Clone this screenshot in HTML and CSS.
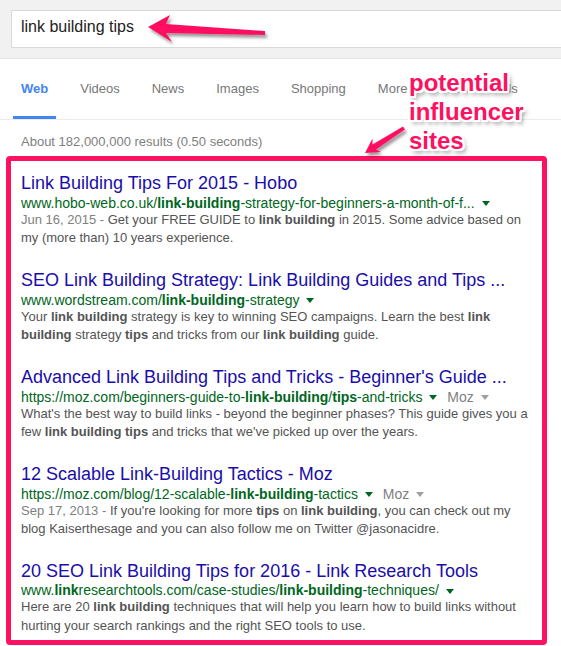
FILE: index.html
```html
<!DOCTYPE html>
<html lang="en">
<head>
    <meta charset="UTF-8">
    <meta name="viewport" content="width=device-width, initial-scale=1.0">
    <title>link building tips - Search</title>
    <link rel="stylesheet" href="styles.css">
</head>
<body>
    <div class="searchbar">
        <div class="searchbox">link building tips</div>
    </div>

    <div class="tabs">
        <span class="tab active">Web</span>
        <span class="tab">Videos</span>
        <span class="tab">News</span>
        <span class="tab">Images</span>
        <span class="tab">Shopping</span>
        <span class="tab">More</span>
        <span class="tab tools">Search tools</span>
    </div>

    <div class="stats">About 182,000,000 results (0.50 seconds)</div>

    <div class="results">
        <div class="result">
            <h3 class="title">Link Building Tips For 2015 - Hobo</h3>
            <div class="url">www.hobo-web.co.uk/<b>link-building</b>-strategy-for-beginners-a-month-of-f... <span class="caret"></span></div>
            <div class="snippet"><span class="date">Jun 16, 2015 - </span>Get your FREE GUIDE to <b>link building</b> in 2015. Some advice based on my (more than) 10 years experience.</div>
        </div>

        <div class="result">
            <h3 class="title">SEO Link Building Strategy: Link Building Guides and Tips ...</h3>
            <div class="url">www.wordstream.com/<b>link-building</b>-strategy <span class="caret"></span></div>
            <div class="snippet">Your <b>link building</b> strategy is key to winning SEO campaigns. Learn the best <b>link building</b> strategy <b>tips</b> and tricks from our <b>link building</b> guide.</div>
        </div>

        <div class="result">
            <h3 class="title">Advanced Link Building Tips and Tricks - Beginner's Guide ...</h3>
            <div class="url">https://moz.com/beginners-guide-to-<b>link-building</b>/<b>tips</b>-and-tricks <span class="caret"></span><span class="source">Moz</span><span class="caret grey"></span></div>
            <div class="snippet">What's the best way to build links - beyond the beginner phases? This guide gives you a few <b>link building tips</b> and tricks that we've picked up over the years.</div>
        </div>

        <div class="result">
            <h3 class="title">12 Scalable Link-Building Tactics - Moz</h3>
            <div class="url">https://moz.com/blog/12-scalable-<b>link-building</b>-tactics <span class="caret"></span><span class="source">Moz</span><span class="caret grey"></span></div>
            <div class="snippet"><span class="date">Sep 17, 2013 - </span>If you're looking for more <b>tips</b> on <b>link building</b>, you can check out my blog Kaiserthesage and you can also follow me on Twitter @jasonacidre.</div>
        </div>

        <div class="result">
            <h3 class="title">20 SEO Link Building Tips for 2016 - Link Research Tools</h3>
            <div class="url">www.<b>link</b>researchtools.com/case-studies/<b>link-building</b>-techniques/ <span class="caret"></span></div>
            <div class="snippet">Here are 20 <b>link building</b> techniques that will help you learn how to build links without hurting your search rankings and the right SEO tools to use.</div>
        </div>
    </div>

    <!-- annotation layer -->
    <svg class="arrows" width="561" height="170" viewBox="0 0 561 170">
        <defs>
            <filter id="shadow" x="-20%" y="-50%" width="140%" height="200%">
                <feDropShadow dx="2" dy="3" stdDeviation="1.5" flood-color="#000" flood-opacity="0.4"/>
            </filter>
        </defs>
        <polygon filter="url(#shadow)" fill="#fe1160" points="148,27 170,15 166,24 265,31 265,35 166,33 172,42"/>
        <polygon filter="url(#shadow)" fill="#fe1160" points="365,153 381,152 376,149.5 405,129.5 403,126.5 372.5,144.5 372.5,138.5"/>
    </svg>
    <div class="callout">potential<br>influencer<br>sites</div>
</body>
</html>
```

FILE: styles.css
```css
body {
    margin: 0;
    font-family: Arial, "Liberation Sans", sans-serif;
    background: #fff;
    overflow: hidden;
    position: relative;
}
.searchbar {
    height: 59px;
    background: #f1f1f1;
    border-bottom: 1px solid #e5e5e5;
    padding: 10px 0 0 11px;
    box-sizing: border-box;
    overflow: hidden;
}
.searchbox {
    background: #fff;
    border: 1px solid #d9d9d9;
    margin-right: -20px;
    height: 38px;
    box-sizing: border-box;
    padding: 0 0 4px 9px;
    font-size: 16px;
    line-height: 32px;
    color: #222;
}
.tabs {
    display: flex;
    padding-left: 13px;
    border-bottom: 1px solid #ebebeb;
}
.tab {
    height: 60px;
    box-sizing: border-box;
    padding: 22px 8px 0;
    margin-right: 16px;
    font-size: 13px;
    line-height: 15px;
    color: #777;
    border-bottom: 3px solid transparent;
}
.tab.active {
    color: #4285f4;
    font-weight: bold;
    border-bottom-color: #4285f4;
}
.tab.tools {
    margin-left: 6px;
}
.stats {
    margin: 14px 0 7px 21px;
    font-size: 13px;
    line-height: 15px;
    color: #808080;
}
.results {
    margin-left: 6px;
    width: 541px;
    box-sizing: border-box;
    border: 5px solid #fe1160;
    border-radius: 4px;
    padding: 12px 4px 5px 10px;
}
.result {
    margin-bottom: 23px;
}
.result:last-child {
    margin-bottom: 0;
}
.title {
    margin: 0;
    font-size: 18px;
    font-weight: normal;
    line-height: 1.2;
    color: #1a0dab;
    white-space: nowrap;
}
.url {
    font-size: 14px;
    line-height: 16px;
    height: 16px;
    color: #006621;
    white-space: nowrap;
}
.caret {
    display: inline-block;
    width: 0;
    height: 0;
    border-top: 5px solid #006621;
    border-left: 4px solid transparent;
    border-right: 4px solid transparent;
    margin-left: 3px;
    vertical-align: middle;
}
.caret.grey {
    border-top-color: #a0a0a0;
    margin-left: 7px;
}
.source {
    color: #808080;
    margin-left: 10px;
}
.snippet {
    font-size: 13px;
    line-height: 1.4;
    color: #545454;
}
.date {
    color: #808080;
}
.arrows {
    position: absolute;
    left: 0;
    top: 0;
    pointer-events: none;
}
.callout {
    position: absolute;
    left: 409px;
    top: 68px;
    font-size: 24px;
    line-height: 29px;
    font-weight: bold;
    color: #fe1160;
    text-shadow: -2px -2px 0 #fff, 2px -2px 0 #fff, -2px 2px 0 #fff, 2px 2px 0 #fff,
        0 -2px 0 #fff, 0 2px 0 #fff, -2px 0 0 #fff, 2px 0 0 #fff,
        3px 4px 4px rgba(0, 0, 0, 0.45);
}
```
